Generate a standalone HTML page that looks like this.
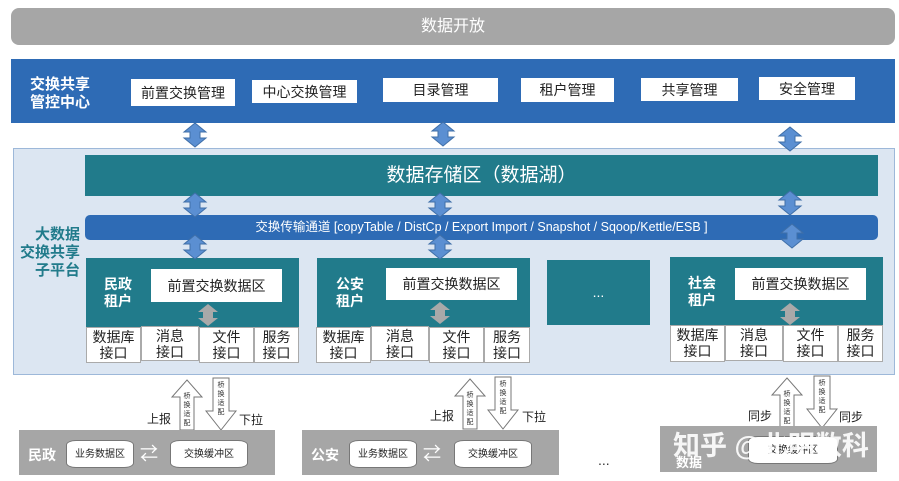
<!DOCTYPE html>
<html><head><meta charset="utf-8"><style>
*{margin:0;padding:0;box-sizing:border-box}
body{width:899px;height:481px;background:#fff;position:relative;overflow:hidden;font-family:"Liberation Sans","Noto Sans CJK SC",sans-serif}
.a{position:absolute}
.wb{position:absolute;background:#fff;color:#222;font-size:14px;text-align:center;display:flex;align-items:center;justify-content:center}
.teal{background:#217b8b}
.cell{position:absolute;background:#fff;border:1px solid #aaa;color:#222;font-size:14px;line-height:16px;text-align:center;padding-top:1px}
.ten{position:absolute;color:#fff;font-weight:bold;font-size:14px;line-height:17px}
.bar{position:absolute;background:#a6a6a6}
.cyl{position:absolute;background:#fff;border:1px solid #777;border-radius:10px/5px;font-size:10px;color:#222;text-align:center}
.lab{position:absolute;font-size:12px;color:#222}
.vt{position:absolute;font-size:7px;line-height:9px;width:8px;color:#333;text-align:center}
</style></head><body>
<div class="a" style="left:11px;top:8px;width:884px;height:37px;background:#a6a6a6;border-radius:8px;color:#fff;font-size:16px;text-align:center;line-height:37px">数据开放</div>
<div class="a" style="left:11px;top:59px;width:884px;height:64px;background:#2e6bb5"></div>
<div class="a" style="left:30px;top:76px;color:#fff;font-weight:bold;font-size:15px;line-height:18px">交换共享<br>管控中心</div>
<div class="wb" style="left:131px;top:79px;width:104px;height:27px">前置交换管理</div>
<div class="wb" style="left:252px;top:80px;width:105px;height:23px">中心交换管理</div>
<div class="wb" style="left:383px;top:78px;width:115px;height:24px">目录管理</div>
<div class="wb" style="left:521px;top:78px;width:93px;height:24px">租户管理</div>
<div class="wb" style="left:641px;top:78px;width:97px;height:23px">共享管理</div>
<div class="wb" style="left:759px;top:77px;width:96px;height:23px">安全管理</div>

<div class="a" style="left:13px;top:148px;width:882px;height:227px;background:#dce6f2;border:1px solid #9db8d9"></div>
<div class="a teal" style="left:85px;top:155px;width:793px;height:41px;color:#fff;font-size:19px;text-align:center;line-height:41px">数据存储区（数据湖）</div>
<div class="a" style="left:85px;top:215px;width:793px;height:25px;background:#2e6bb5;border-radius:5px;color:#fff;font-size:12.5px;text-align:center;line-height:25px">交换传输通道 [copyTable / DistCp / Export Import / Snapshot / Sqoop/Kettle/ESB ]</div>
<div class="a" style="left:12px;top:226px;width:68px;text-align:right;color:#217b8b;font-weight:bold;font-size:15px;line-height:18px">大数据<br>交换共享<br>子平台</div>

<div class="a teal" style="left:86px;top:258px;width:213px;height:70px"></div>
<div class="ten" style="left:104px;top:276px">民政<br>租户</div>
<div class="wb" style="left:151px;top:269px;width:131px;height:33px">前置交换数据区</div>
<div class="a teal" style="left:317px;top:258px;width:213px;height:70px"></div>
<div class="ten" style="left:336px;top:276px">公安<br>租户</div>
<div class="wb" style="left:386px;top:268px;width:131px;height:32px">前置交换数据区</div>
<div class="a teal" style="left:547px;top:260px;width:103px;height:65px;color:#fff;text-align:center;line-height:65px;font-size:14px">...</div>
<div class="a teal" style="left:670px;top:257px;width:213px;height:70px"></div>
<div class="ten" style="left:688px;top:275px">社会<br>租户</div>
<div class="wb" style="left:735px;top:268px;width:131px;height:32px">前置交换数据区</div>

<div class="cell" style="left:86px;top:327px;width:55px;height:36px">数据库<br>接口</div>
<div class="cell" style="left:141px;top:326px;width:58px;height:35px">消息<br>接口</div>
<div class="cell" style="left:199px;top:327px;width:55px;height:36px">文件<br>接口</div>
<div class="cell" style="left:254px;top:327px;width:45px;height:36px">服务<br>接口</div>
<div class="cell" style="left:316px;top:327px;width:55px;height:36px">数据库<br>接口</div>
<div class="cell" style="left:371px;top:326px;width:58px;height:35px">消息<br>接口</div>
<div class="cell" style="left:429px;top:327px;width:55px;height:36px">文件<br>接口</div>
<div class="cell" style="left:484px;top:327px;width:46px;height:36px">服务<br>接口</div>
<div class="cell" style="left:670px;top:325px;width:55px;height:37px">数据库<br>接口</div>
<div class="cell" style="left:725px;top:325px;width:58px;height:36px">消息<br>接口</div>
<div class="cell" style="left:783px;top:325px;width:55px;height:37px">文件<br>接口</div>
<div class="cell" style="left:838px;top:325px;width:45px;height:37px">服务<br>接口</div>

<svg class="a" style="left:0;top:0" width="899" height="481">
<defs>
<polygon id="d" points="0,-12 11,-3 5,-3 5,3 11,3 0,12 -11,3 -5,3 -5,-3 -11,-3" fill="#5b8fd2" stroke="#3f6fa8" stroke-width="1"/>
<polygon id="g" points="0,-11 10,-3 5,-3 5,3 10,3 0,11 -10,3 -5,3 -5,-3 -10,-3" fill="#a9a9a9"/>
<polygon id="up" points="15,0 30,17 22,17 22,50 8,50 8,17 0,17" fill="#fff" stroke="#777" stroke-width="1"/>
<polygon id="dn" points="8,0 24,0 24,33 31,33 16,52 1,33 8,33" fill="#fff" stroke="#777" stroke-width="1"/>
</defs>
<use href="#d" x="195" y="135"/><use href="#d" x="443" y="134"/><use href="#d" x="790" y="139"/>
<use href="#d" x="195" y="205"/><use href="#d" x="440" y="205"/><use href="#d" x="790" y="203"/>
<use href="#d" x="195" y="247"/><use href="#d" x="440" y="247"/><use href="#d" x="792" y="236"/>
<use href="#g" x="208" y="315"/><use href="#g" x="440" y="313"/><use href="#g" x="790" y="314"/>
<use href="#up" x="172" y="380"/><use href="#dn" x="205" y="378"/>
<use href="#up" x="455" y="379"/><use href="#dn" x="487" y="377"/>
<use href="#up" x="772" y="378"/><use href="#dn" x="806" y="376"/>
</svg>
<div class="vt" style="left:183px;top:392px">桥换适配</div>
<div class="vt" style="left:217px;top:381px">桥换适配</div>
<div class="vt" style="left:466px;top:391px">桥换适配</div>
<div class="vt" style="left:499px;top:380px">桥换适配</div>
<div class="vt" style="left:783px;top:390px">桥换适配</div>
<div class="vt" style="left:818px;top:379px">桥换适配</div>
<div class="lab" style="left:147px;top:410px">上报</div><div class="lab" style="left:239px;top:411px">下拉</div>
<div class="lab" style="left:430px;top:407px">上报</div><div class="lab" style="left:522px;top:408px">下拉</div>
<div class="lab" style="left:748px;top:407px">同步</div><div class="lab" style="left:839px;top:408px">同步</div>

<div class="bar" style="left:19px;top:430px;width:256px;height:45px"></div>
<div class="a" style="left:28px;top:445px;color:#fff;font-weight:bold;font-size:14px">民政</div>
<div class="cyl" style="left:66px;top:440px;width:68px;height:28px;line-height:28px">业务数据区</div>
<div class="a" style="left:140px;top:444px;color:#fff;font-size:18px;line-height:20px">⇄</div>
<div class="cyl" style="left:170px;top:440px;width:78px;height:28px;line-height:28px">交换缓冲区</div>
<div class="bar" style="left:302px;top:430px;width:257px;height:45px"></div>
<div class="a" style="left:311px;top:445px;color:#fff;font-weight:bold;font-size:14px">公安</div>
<div class="cyl" style="left:349px;top:440px;width:68px;height:28px;line-height:28px">业务数据区</div>
<div class="a" style="left:423px;top:444px;color:#fff;font-size:18px;line-height:20px">⇄</div>
<div class="cyl" style="left:454px;top:440px;width:78px;height:28px;line-height:28px">交换缓冲区</div>
<div class="a" style="left:598px;top:452px;font-size:14px;color:#333">...</div>
<div class="bar" style="left:660px;top:426px;width:217px;height:46px"></div>
<div class="cyl" style="left:748px;top:436px;width:90px;height:28px;line-height:28px">交换缓冲区</div>
<div class="a" style="left:673px;top:424px;color:rgba(255,255,255,.9);font-size:27px;font-weight:bold;white-space:nowrap">知乎 @北明数科</div>
<div class="a" style="left:676px;top:452px;color:#fff;font-size:13px;font-weight:bold">数据</div>
</body></html>
